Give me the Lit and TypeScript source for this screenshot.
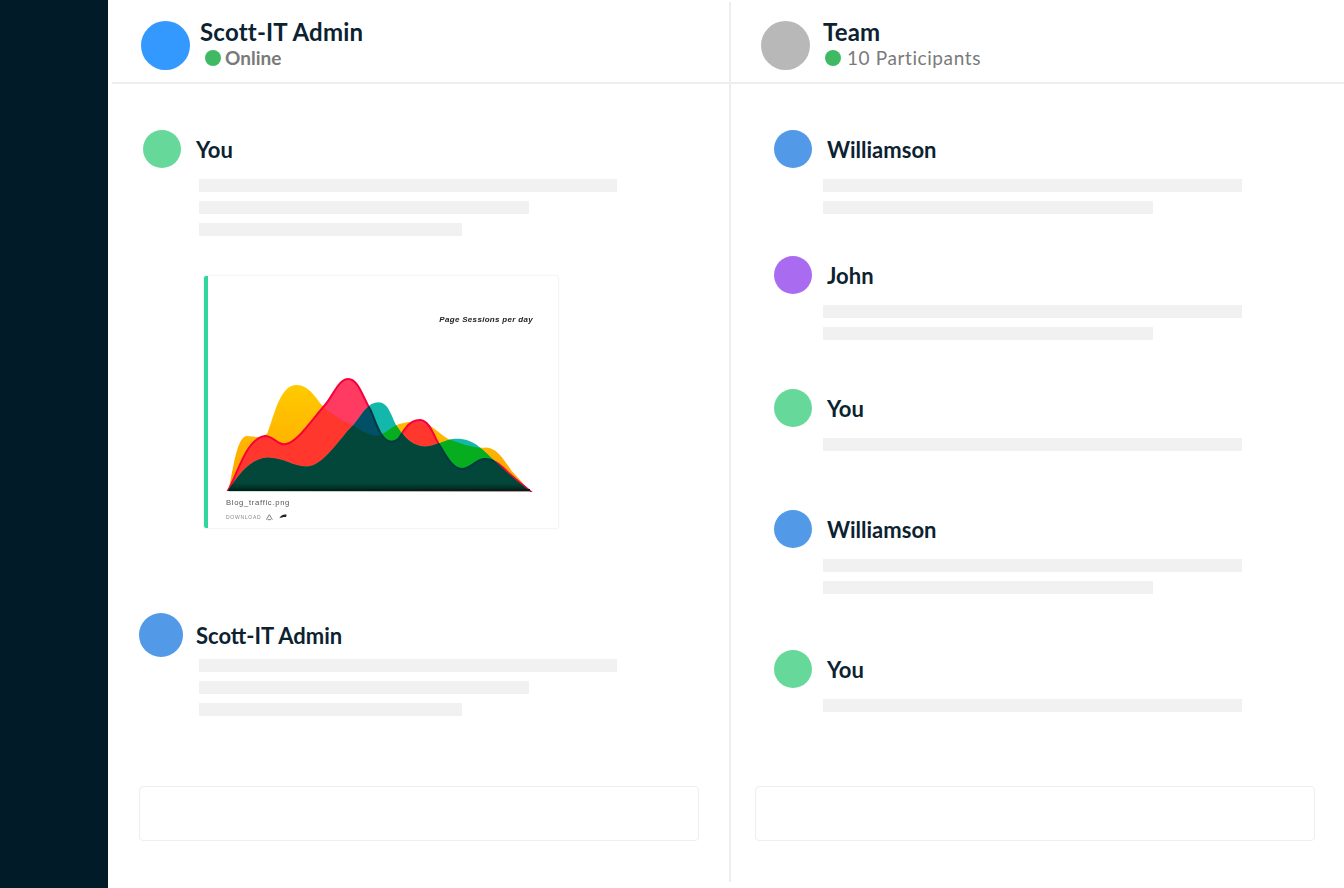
import { LitElement, html, css } from 'lit';
import { customElement } from 'lit/decorators.js';

// chart curves, in the svg's own coordinates
const YELLOW = 'M115,675 C128,630 138,515 170,513 C195,513 212,525 232,505 C255,445 270,360 320,360 C355,360 375,395 395,420 C425,450 455,465 490,482 C520,500 545,514 565,512 C590,505 605,480 640,474 C665,468 695,468 720,482 C740,495 755,510 775,522 C810,535 850,550 885,548 C920,545 945,590 965,618 L1020,678 Z';
const RED = 'M115,675 C145,620 170,520 225,513 C250,513 262,540 285,538 C320,535 365,465 405,420 C430,392 445,342 475,342 C505,342 520,400 540,432 C555,460 570,530 605,530 C630,530 632,505 648,488 C660,472 675,465 690,465 C720,468 730,510 745,535 C765,565 785,612 815,612 C845,612 855,582 885,582 C920,582 945,615 965,632 L1020,678 Z';
const TEAL = 'M115,675 C150,625 185,578 235,578 C280,578 310,605 350,605 C400,605 450,520 490,480 C510,460 530,412 565,412 C600,412 605,465 625,490 C645,520 670,545 705,545 C725,545 745,535 775,525 C800,518 840,520 870,548 C900,570 950,630 1020,678 Z';

const PINS = [
  { x: 167, top: 327, bottom: 515, label: '600' },
  { x: 477, top: 153, bottom: 340, label: '900' },
  { x: 692, top: 287, bottom: 465, label: '750' },
  { x: 890, top: 359, bottom: 548, label: '500' },
];

type Msg = { name: string; color: string; top: number; bars: number[] };

const TEAM: Msg[] = [
  { name: 'Williamson', color: '#5299e8', top: 46, bars: [419, 330] },
  { name: 'John', color: '#a96cf0', top: 42, bars: [419, 330] },
  { name: 'You', color: '#66d99a', top: 49, bars: [419] },
  { name: 'Williamson', color: '#5299e8', top: 59, bars: [419, 330] },
  { name: 'You', color: '#66d99a', top: 56, bars: [419] },
];

@customElement('app-root')
export class AppRoot extends LitElement {
  static styles = css`
    :host {
      display: flex;
      height: 888px;
      overflow: hidden;
      background: #fff;
      font-family: 'Lato', 'Liberation Sans', sans-serif;
      color: #0c2231;
    }

    .sidebar {
      width: 108px;
      background: #011c28;
    }

    .panel {
      display: flex;
      flex-direction: column;
      margin-top: 2px;
      height: 880px;
    }

    .panel.left {
      width: 621px;
      border-right: 2px solid #eeeeee;
    }

    .panel.right {
      flex: 1;
    }

    header {
      display: flex;
      align-items: center;
      height: 80px;
      border-bottom: 2px solid #eeeeee;
      box-sizing: content-box;
    }

    .left header {
      margin-left: 4px;
      padding-left: 29px;
    }

    .right header {
      padding-left: 30px;
    }

    .head-avatar {
      width: 49px;
      height: 49px;
      border-radius: 50%;
      margin-top: 7px;
      flex: none;
    }

    .head-text {
      display: flex;
      flex-direction: column;
      margin-left: 10px;
      margin-top: 3px;
    }

    .right .head-text {
      margin-left: 13px;
    }

    .title {
      font-size: 24px;
      line-height: 28px;
      font-weight: 700;
      letter-spacing: 0.2px;
    }

    .status {
      display: flex;
      align-items: center;
      font-size: 19px;
      line-height: 24px;
      font-weight: 700;
      color: #7a7a7a;
      margin-left: 5px;
    }

    .right .status {
      margin-left: 2px;
      font-weight: 400;
      letter-spacing: 0.6px;
    }

    .dot {
      width: 16px;
      height: 16px;
      border-radius: 50%;
      background: #3fba63;
      margin-right: 4px;
    }

    .right .dot {
      margin-right: 6px;
    }

    .body {
      flex: 1;
      display: flex;
      flex-direction: column;
    }

    .left .body {
      padding-left: 31px;
    }

    .right .body {
      padding-left: 24px;
    }

    .who {
      display: flex;
      align-items: center;
      font-size: 22px;
      font-weight: 700;
      height: 38px;
    }

    .avatar {
      width: 38px;
      height: 38px;
      border-radius: 50%;
      flex: none;
      margin-right: 15px;
    }

    .left .who {
      padding-left: 4px;
    }

    .right .who {
      padding-left: 19px;
    }

    .who.big {
      height: 44px;
      padding-left: 0;
    }

    .who.big .avatar {
      width: 44px;
      height: 44px;
      margin-right: 13px;
    }

    .bars {
      display: flex;
      flex-direction: column;
      gap: 9px;
      margin-top: 11px;
    }

    .left .bars {
      padding-left: 60px;
    }

    .right .bars {
      padding-left: 68px;
    }

    .who.big + .bars {
      margin-top: 2px;
    }

    .bar {
      height: 13px;
      background: #f1f1f1;
    }

    .card {
      display: flex;
      width: 350px;
      height: 252px;
      margin: 40px 0 85px 65px;
      border-left: 4px solid #2fd6a0;
      border-radius: 2px;
      box-shadow: 0 0 0 1px #f5f5f5, 0 0 3px #f0f0f0;
    }

    .card svg {
      filter: blur(0.45px);
    }

    .input {
      width: 560px;
      height: 55px;
      box-sizing: border-box;
      border: 1px solid #eeeeee;
      border-radius: 4px;
      margin-top: auto;
      margin-bottom: 41px;
      background: #fff;
    }
  `;

  renderChart() {
    return html`
      <svg width="350" height="252" viewBox="54 33 1050 756" font-family="Liberation Sans, sans-serif">
        <defs>
          <clipPath id="clip-y"><path d=${YELLOW}></path></clipPath>
          <clipPath id="clip-t"><path d=${TEAL}></path></clipPath>
          <linearGradient id="grad-y" x1="0" y1="0" x2="0" y2="1">
            <stop offset="0" stop-color="#ffca00"></stop>
            <stop offset="1" stop-color="#ffa200"></stop>
          </linearGradient>
          <linearGradient id="grad-g" x1="0" y1="0" x2="0" y2="1">
            <stop offset="0.8" stop-color="#03473a"></stop>
            <stop offset="0.93" stop-color="#03473a"></stop>
            <stop offset="1" stop-color="#012219"></stop>
          </linearGradient>
        </defs>

        ${PINS.map(
          (p) => html`
            <line x1=${p.x} x2=${p.x} y1=${p.top} y2=${p.bottom} stroke="#dcdcdc" stroke-width="6"></line>
            <circle cx=${p.x} cy=${p.top} r="5" fill="#777"></circle>
            <text x=${p.x} y=${p.top - 24} font-size="19" fill="#777" text-anchor="middle">${p.label}</text>
          `,
        )}

        <path d=${YELLOW} fill="url(#grad-y)"></path>
        <path d=${RED} fill="#ff3b62"></path>
        <g clip-path="url(#clip-y)"><path d=${RED} fill="#ff372c"></path></g>
        <path d=${RED} fill="none" stroke="#f8003c" stroke-width="6"></path>
        <path d=${TEAL} fill="#14b8aa"></path>
        <g clip-path="url(#clip-t)">
          <path d=${YELLOW} fill="#06ad1e"></path>
          <path d=${RED} fill="#015066"></path>
          <g clip-path="url(#clip-y)"><path d=${RED} fill="url(#grad-g)"></path></g>
          <path d=${RED} fill="none" stroke="#013a44" stroke-width="6"></path>
        </g>
        <rect x="115" y="672" width="905" height="6" fill="#012219"></rect>
        <rect x="115" y="678" width="905" height="2" fill="#a9d8cc"></rect>

        <text x="748" y="172" font-size="24" font-weight="700" font-style="italic" fill="#222" textLength="280">Page Sessions per day</text>
        <text x="108" y="720" font-size="23" fill="#555" textLength="190">Blog_traffic.png</text>
        <text x="108" y="761" font-size="15" fill="#888" textLength="104">DOWNLOAD</text>
        <path d="M229,764 L238,749 L247,764 M233,764 H243" fill="none" stroke="#666" stroke-width="2.5"></path>
        <path d="M268,760 C272,752 280,747 290,749 L288,756 C282,755 274,757 268,760 Z" fill="#222"></path>
      </svg>
    `;
  }

  renderMsg(m: Msg) {
    return html`
      <div class="msg" style="margin-top:${m.top}px">
        <div class="who">
          <span class="avatar" style="background:${m.color}"></span>${m.name}
        </div>
        <div class="bars">
          ${m.bars.map((w) => html`<div class="bar" style="width:${w}px"></div>`)}
        </div>
      </div>
    `;
  }

  render() {
    return html`
      <div class="sidebar"></div>

      <section class="panel left">
        <header>
          <div class="head-avatar" style="background:#3399ff"></div>
          <div class="head-text">
            <div class="title">Scott-IT Admin</div>
            <div class="status"><span class="dot"></span>Online</div>
          </div>
        </header>
        <div class="body">
          <div class="msg" style="margin-top:46px">
            <div class="who">
              <span class="avatar" style="background:#66d99a"></span>You
            </div>
            <div class="bars">
              <div class="bar" style="width:418px"></div>
              <div class="bar" style="width:330px"></div>
              <div class="bar" style="width:263px"></div>
            </div>
            <div class="card">${this.renderChart()}</div>
          </div>
          <div class="msg">
            <div class="who big">
              <span class="avatar" style="background:#5299e8"></span>Scott-IT Admin
            </div>
            <div class="bars">
              <div class="bar" style="width:418px"></div>
              <div class="bar" style="width:330px"></div>
              <div class="bar" style="width:263px"></div>
            </div>
          </div>
          <div class="input"></div>
        </div>
      </section>

      <section class="panel right">
        <header>
          <div class="head-avatar" style="background:#b8b8b8"></div>
          <div class="head-text">
            <div class="title">Team</div>
            <div class="status"><span class="dot"></span>10 Participants</div>
          </div>
        </header>
        <div class="body">
          ${TEAM.map((m) => this.renderMsg(m))}
          <div class="input"></div>
        </div>
      </section>
    `;
  }
}
